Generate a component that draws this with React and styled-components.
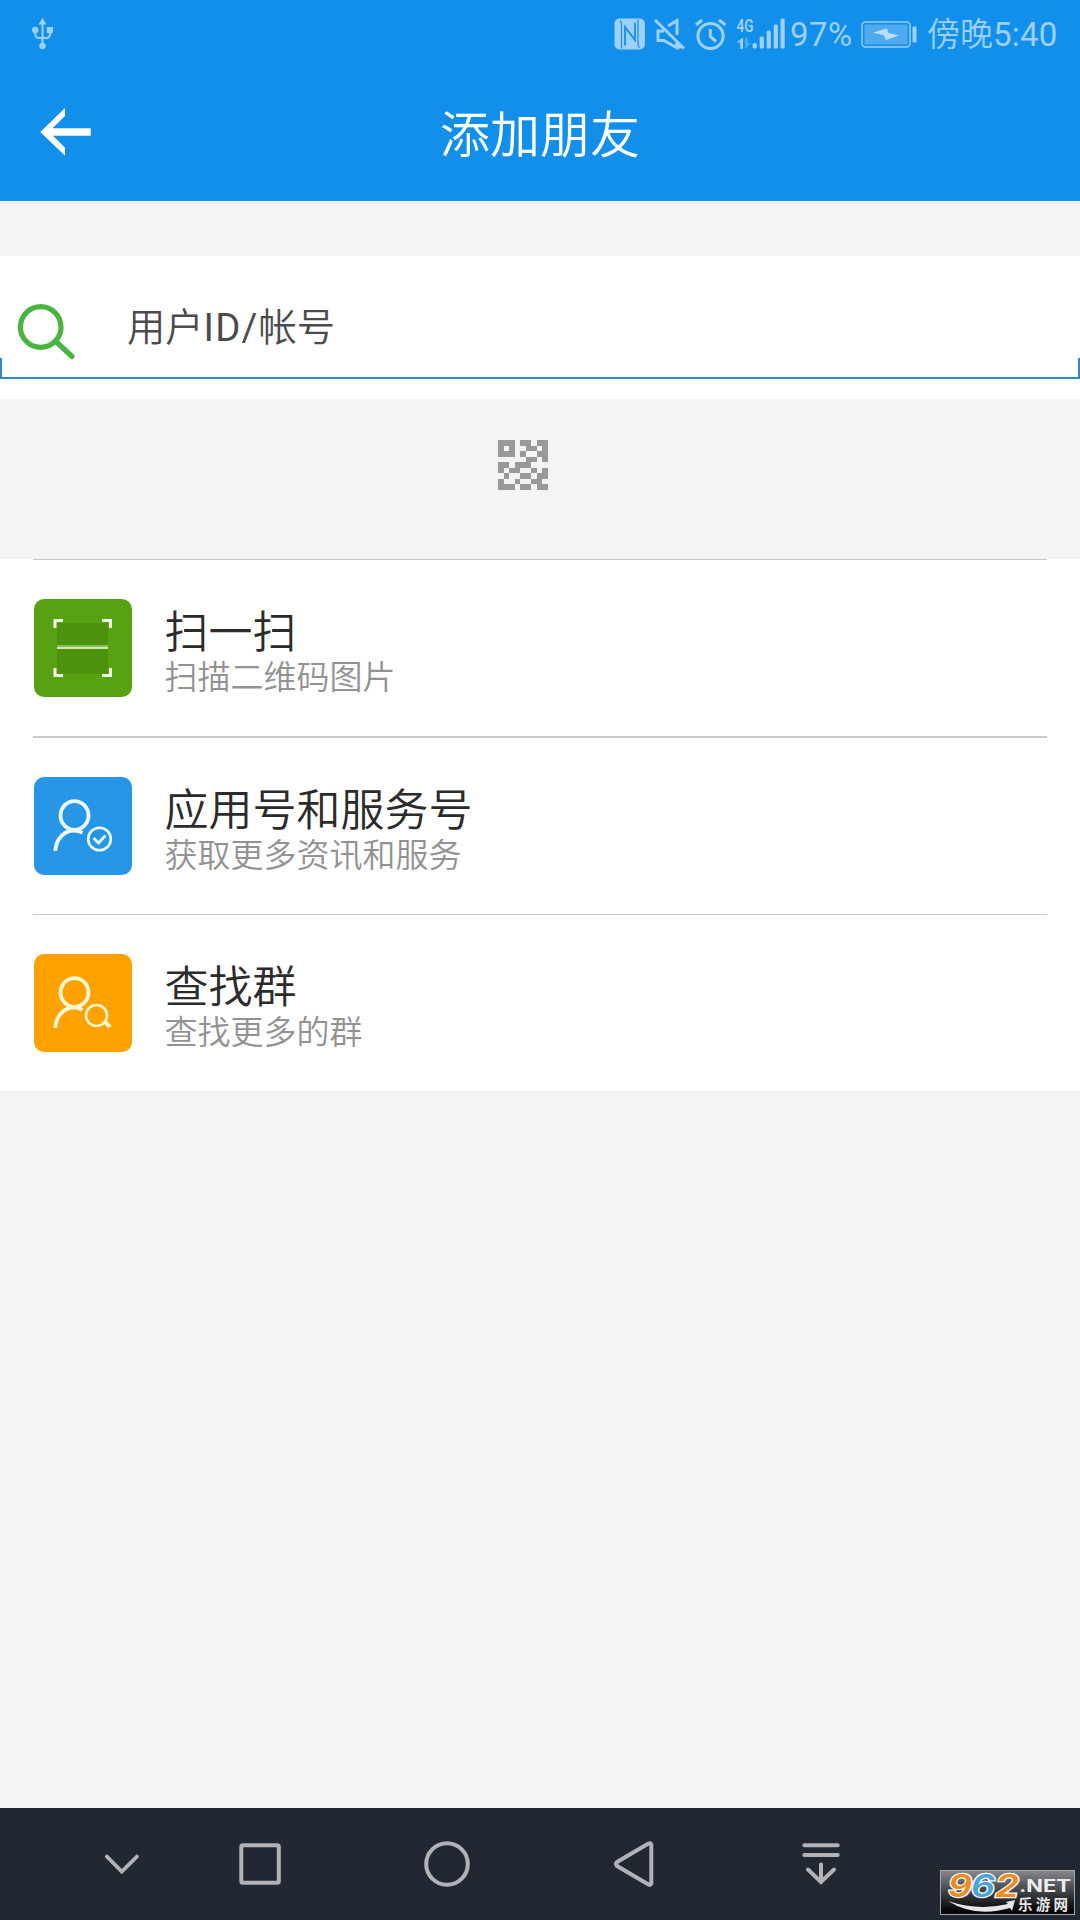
import React from "react";
import styled, { createGlobalStyle } from "styled-components";

const GlobalStyle = createGlobalStyle`
  * { box-sizing: border-box; }
  body { margin: 0; background: #f4f4f4; }
`;

const Screen = styled.div`
  position: relative;
  display: flex;
  flex-direction: column;
  width: 1080px;
  height: 1920px;
  overflow: hidden;
  background: #f4f4f4;
  font-family: Roboto, "Noto Sans CJK SC", sans-serif;
  font-weight: 350;
  white-space: nowrap;
`;

const Header = styled.header`
  height: 201px;
  background: #128eeb;
  color: #fff;
`;

const StatusBar = styled.div`
  display: flex;
  align-items: center;
  justify-content: space-between;
  height: 68px;
  padding: 0 23px 0 32px;
  color: #9dd1fa;
`;

const StatusGroup = styled.div`
  display: flex;
  align-items: center;
`;

const StatusIcon = styled.svg`
  display: block;
  flex: none;
  margin-right: ${(p) => p.$gap || 0}px;
`;

const StatusText = styled.span`
  width: ${(p) => p.$width}px;
  padding-top: 1px;
  font-size: 33px;
  font-weight: 350;
  line-height: 68px;
  letter-spacing: ${(p) => p.$spacing || 0}px;
  margin-right: ${(p) => p.$gap || 0}px;
`;

const TitleBar = styled.div`
  display: grid;
  grid-template-columns: 130px 1fr 130px;
  height: 133px;
`;

const BackButton = styled.button`
  display: block;
  height: 128px;
  padding: 0 0 0 40px;
  border: 0;
  background: none;
  svg { display: block; }
`;

const Title = styled.h1`
  margin: 0;
  font-size: 50px;
  font-weight: 350;
  line-height: 137px;
  text-align: center;
`;

const SearchPanel = styled.section`
  height: 143px;
  margin-top: 55px;
  background: #fff;
`;

const SearchRow = styled.div`
  display: flex;
  height: 102px;
  padding-left: 17px;
  svg { display: block; flex: none; margin-top: 47px; }
`;

const SearchHint = styled.span`
  margin-left: 50px;
  color: #4b4b4b;
  font-size: 38.300px;
  line-height: 143px;
`;

const LatinPart = styled.span`
  font-weight: 400;
  letter-spacing: ${(p) => p.$spacing || 0}px;
`;

const SearchUnderline = styled.div`
  height: 21px;
  border: solid #2f8bcb;
  border-width: 0 2px 2px;
`;

const QrArea = styled.div`
  height: 160px;
  padding: 41px 0 0 498px;
  svg { display: block; }
`;

const List = styled.main`
  padding: 0 33px;
  background: #fff;
`;

const Row = styled.div`
  display: flex;
  height: ${(p) => 176 + p.$line}px;
  border-top: ${(p) => p.$line}px solid #c9c9c9;
  padding: 39px 0 0 1px;
`;

const Tile = styled.div`
  width: 98px;
  height: 98px;
  border-radius: 10px;
  background: ${(p) => p.$color};
  svg { display: block; }
`;

const RowText = styled.div`
  margin-left: 32.500px;
`;

const RowTitle = styled.div`
  color: #2b2b2b;
  font-size: 44px;
  line-height: 52px;
  margin-top: 8px;
`;

const RowNote = styled.div`
  color: #929292;
  font-size: 33px;
  line-height: 38px;
`;

const NavBar = styled.nav`
  display: flex;
  align-items: center;
  height: 112px;
  margin-top: auto;
  padding-left: 94px;
  background: #222831;
  svg { display: block; flex: none; }
`;

const NavButton = styled.button`
  width: 56px;
  height: 56px;
  padding: 0;
  border: 0;
  background: none;
  margin-right: ${(p) => p.$gap}px;
`;

const Watermark = styled.div`
  position: absolute;
  left: 940px;
  top: 1870px;
  width: 135px;
  height: 45px;
  border: 1px solid #a5a7aa;
  background: linear-gradient(#85878b, #3c3f44 50%, #08090b 90%);
  svg { display: block; overflow: visible; }
`;

const QR = [
  "111011011",
  "101001101",
  "111010011",
  "000001101",
  "110111000",
  "101100101",
  "010011011",
  "100100110",
  "111011011",
];

function QrIcon() {
  return (
    <svg width="50" height="50" viewBox="0 0 9 9" shapeRendering="crispEdges" fill="#999">
      {QR.flatMap((line, y) =>
        [...line].map((c, x) => c === "1" && <rect key={`${x}-${y}`} x={x} y={y} width="1" height="1" />)
      )}
    </svg>
  );
}

function ScanIcon() {
  return (
    <svg width="98" height="98" viewBox="0 0 98 98">
      <rect x="23" y="24" width="51" height="51" fill="#4f920d" />
      <rect x="23" y="46" width="51" height="2" fill="#86ba57" />
      <rect x="23" y="48" width="51" height="2" fill="#cdebad" />
      <path d="M21 29V21.500H29M68 21.500H76.500V29M21 69V76.500H29M68 76.500H76.500V69" fill="none" stroke="#f0fbe3" strokeWidth="3" />
    </svg>
  );
}

function Person({ color, children }) {
  return (
    <svg width="98" height="98" viewBox="0 0 98 98" fill="none" stroke={color} strokeWidth="3.800">
      <ellipse cx="40.500" cy="38.500" rx="14" ry="14.300" />
      <path d="M21.300 74C22 61 31 53.500 40 53.500C43.500 53.500 46 54.200 48.500 55.800" />
      {children}
    </svg>
  );
}

function AccountIcon() {
  return (
    <Person color="#ebfaff">
      <circle cx="65.500" cy="62" r="11.300" strokeWidth="2.600" />
      <path d="M59.500 61L64.500 66L71.500 58.500" strokeWidth="2.800" />
    </Person>
  );
}

function GroupSearchIcon() {
  return (
    <Person color="#fff7cf">
      <circle cx="62.500" cy="61.500" r="10.500" strokeWidth="2.600" />
      <path d="M70 67L76 73" strokeWidth="4" />
    </Person>
  );
}

const ROWS = [
  { title: "扫一扫", note: "扫描二维码图片", color: "#58a111", line: 1, icon: <ScanIcon /> },
  { title: "应用号和服务号", note: "获取更多资讯和服务", color: "#2796e7", line: 2, icon: <AccountIcon /> },
  { title: "查找群", note: "查找更多的群", color: "#ffa200", line: 1, icon: <GroupSearchIcon /> },
];

function Status() {
  return (
    <StatusBar>
      <StatusIcon width="22" height="32" viewBox="32 18 22 32" fill="currentColor">
        <path d="M42.500 18L46.500 24.500H38.500Z" />
        <circle cx="35.200" cy="30" r="3.200" />
        <rect x="46.800" y="27" width="6.200" height="6" />
        <circle cx="42.500" cy="46" r="3.200" />
        <path d="M42.500 22V46M35.200 30V34Q35.200 38 39.500 38H46Q50 38 50 34V30" fill="none" stroke="currentColor" strokeWidth="2.100" />
      </StatusIcon>
      <StatusGroup>
        <StatusIcon $gap={9} width="31" height="32" viewBox="614.500 17.500 31 32">
          <rect x="615" y="18" width="30.400" height="31" rx="5" fill="currentColor" />
          <path d="M620.500 20Q622 21 622 24V48M640 47.500Q638.500 46 638.500 43V19" fill="none" stroke="#128eeb" strokeWidth="1.200" />
          <path d="M625.500 45V26.500L635.500 39.500V22" fill="none" stroke="#128eeb" strokeWidth="1.800" />
        </StatusIcon>
        <StatusIcon $gap={9} width="32" height="32" viewBox="655 17 32 32" fill="none" stroke="currentColor" strokeWidth="2.900">
          <path d="M656 19L685 47.500" strokeWidth="3" />
          <path d="M669 25L678 19.500V34M665 30H659V39.500H665L678 47V42M676 43L682 47" />
        </StatusIcon>
        <StatusIcon $gap={9} width="32" height="32" viewBox="695 17 32 32" fill="none" stroke="currentColor" strokeWidth="3">
          <circle cx="710.500" cy="35" r="12.600" />
          <path d="M696 24L702 19M719 19L725.500 24" />
          <path d="M710.300 28V35.500L716 40.500" />
        </StatusIcon>
        <StatusIcon $gap={5} width="49" height="32" viewBox="736 17 49 32" fill="currentColor" overflow="visible">
          <text x="736.500" y="31" fontSize="18.500" fontWeight="600" fontFamily="Roboto, sans-serif" textLength="17" lengthAdjust="spacingAndGlyphs">4G</text>
          <path d="M743 36.500V48H740.200V41.500H736.500Z" />
          <path d="M745 36.500V48L751 42H747.800V36.500Z" opacity="0.400" />
          <rect x="752.500" y="42" width="4.500" height="5.500" rx="2" />
          <rect x="759.700" y="35.500" width="4.200" height="12" rx="1.500" />
          <rect x="766.700" y="29.500" width="4.200" height="18" rx="1.500" />
          <rect x="773.700" y="23.500" width="4.200" height="24" rx="1.500" />
          <rect x="780.500" y="17.500" width="4.200" height="30" rx="1.500" />
        </StatusIcon>
        <StatusText $width={63} $gap={8}>
          <LatinPart $spacing={0.4}>97%</LatinPart>
        </StatusText>
        <StatusIcon $gap={10} width="56" height="27" viewBox="861 20 56 27">
          <rect x="862" y="21" width="48" height="25" rx="3.500" fill="none" stroke="currentColor" strokeWidth="1.400" />
          <rect x="864.500" y="23.500" width="43" height="20" fill="#4faaf0" />
          <rect x="912.500" y="25.500" width="4" height="16" rx="1" fill="currentColor" />
          <path d="M873 31.500L887 27.500L888.500 32L899 34.500L886 39L884 34.500Z" fill="#b9defb" />
        </StatusIcon>
        <StatusText $width={130}>傍晚<LatinPart $spacing={0.2}>5:40</LatinPart></StatusText>
      </StatusGroup>
    </StatusBar>
  );
}

function Navigation() {
  return (
    <NavBar>
      <NavButton $gap={82} aria-label="收起">
        <svg width="56" height="56" viewBox="94 1835.500 56 56" fill="none" stroke="#b3b3b6" strokeWidth="3.800" strokeLinecap="round">
          <path d="M106.800 1856L121.800 1871L137 1856" />
        </svg>
      </NavButton>
      <NavButton $gap={130} aria-label="最近任务">
        <svg width="56" height="56" viewBox="232 1836 56 56" fill="none" stroke="#b3b3b6" strokeWidth="4">
          <rect x="241.300" y="1845.300" width="37.500" height="37.500" rx="1.500" />
        </svg>
      </NavButton>
      <NavButton $gap={130} aria-label="主页">
        <svg width="56" height="56" viewBox="418 1836 56 56" fill="none" stroke="#b3b3b6" strokeWidth="4">
          <circle cx="447" cy="1864" r="20.800" />
        </svg>
      </NavButton>
      <NavButton $gap={134} aria-label="返回">
        <svg width="56" height="56" viewBox="604 1836 56 56" fill="none" stroke="#b3b3b6" strokeWidth="4" strokeLinejoin="round">
          <path d="M651.300 1844.500V1883.500Q650.500 1885.500 648.500 1884.500L617 1866Q615 1864 617 1862L648.500 1843.500Q650.500 1842.500 651.300 1844.500Z" />
        </svg>
      </NavButton>
      <NavButton $gap={0} aria-label="通知">
        <svg width="56" height="56" viewBox="794 1836 56 56" fill="none" stroke="#b3b3b6" strokeWidth="4" strokeLinecap="round">
          <path d="M804.300 1845.300H837.700M804.300 1855H837.700M821 1864.500V1882M808 1869.500L821 1882L834 1869.500" />
        </svg>
      </NavButton>
    </NavBar>
  );
}

function SiteMark() {
  return (
    <Watermark>
      <svg width="133" height="43" viewBox="941 1871 133 43">
        <g fontFamily="Inter, sans-serif" fontWeight="600" fontStyle="italic" fontSize="31" stroke="#fff" strokeWidth="2.500" paintOrder="stroke">
          <text x="948" y="1897" textLength="24" lengthAdjust="spacingAndGlyphs" fill="#ef8a1d">9</text>
          <text x="971" y="1897" textLength="24" lengthAdjust="spacingAndGlyphs" fill="#4ba3dc">6</text>
          <text x="995" y="1897" textLength="24" lengthAdjust="spacingAndGlyphs" fill="#ef8a1d">2</text>
        </g>
        <path d="M948 1901Q978 1911 1008 1904L1006 1902L1015 1900L1012 1911L1010 1908Q975 1918 948 1901Z" fill="#e4e6e8" />
        <text x="1019" y="1891.500" fontFamily="Inter, sans-serif" fontWeight="700" fontSize="17" textLength="52" lengthAdjust="spacingAndGlyphs" fill="#eee">.NET</text>
        <text x="1018" y="1909.500" fontFamily="'Noto Sans CJK SC', sans-serif" fontWeight="700" fontSize="14.500" textLength="50" fill="#e6e6e6">乐游网</text>
      </svg>
    </Watermark>
  );
}

export default function App() {
  return (
    <Screen>
      <GlobalStyle />
      <Header>
        <Status />
        <TitleBar>
          <BackButton aria-label="返回">
            <svg width="52" height="50" viewBox="40 107 52 50" fill="#fff">
              <path d="M40.300 132L65 108V116L52.500 128.300H90.700V135.800H53L65 147.800V155.800Z" />
            </svg>
          </BackButton>
          <Title>添加朋友</Title>
        </TitleBar>
      </Header>
      <SearchPanel>
        <SearchRow>
          <svg width="60" height="58" viewBox="17 303 60 58" fill="none" stroke="#49b441" strokeWidth="5.200" strokeLinecap="round">
            <circle cx="40.700" cy="327" r="20.300" />
            <path d="M57 342.500L72 356.500" />
          </svg>
          <SearchHint>用户<LatinPart $spacing={1.2}>ID/</LatinPart>帐号</SearchHint>
        </SearchRow>
        <SearchUnderline />
      </SearchPanel>
      <QrArea>
        <QrIcon />
      </QrArea>
      <List>
        {ROWS.map((row) => (
          <Row key={row.title} $line={row.line}>
            <Tile $color={row.color}>{row.icon}</Tile>
            <RowText>
              <RowTitle>{row.title}</RowTitle>
              <RowNote>{row.note}</RowNote>
            </RowText>
          </Row>
        ))}
      </List>
      <Navigation />
      <SiteMark />
    </Screen>
  );
}
